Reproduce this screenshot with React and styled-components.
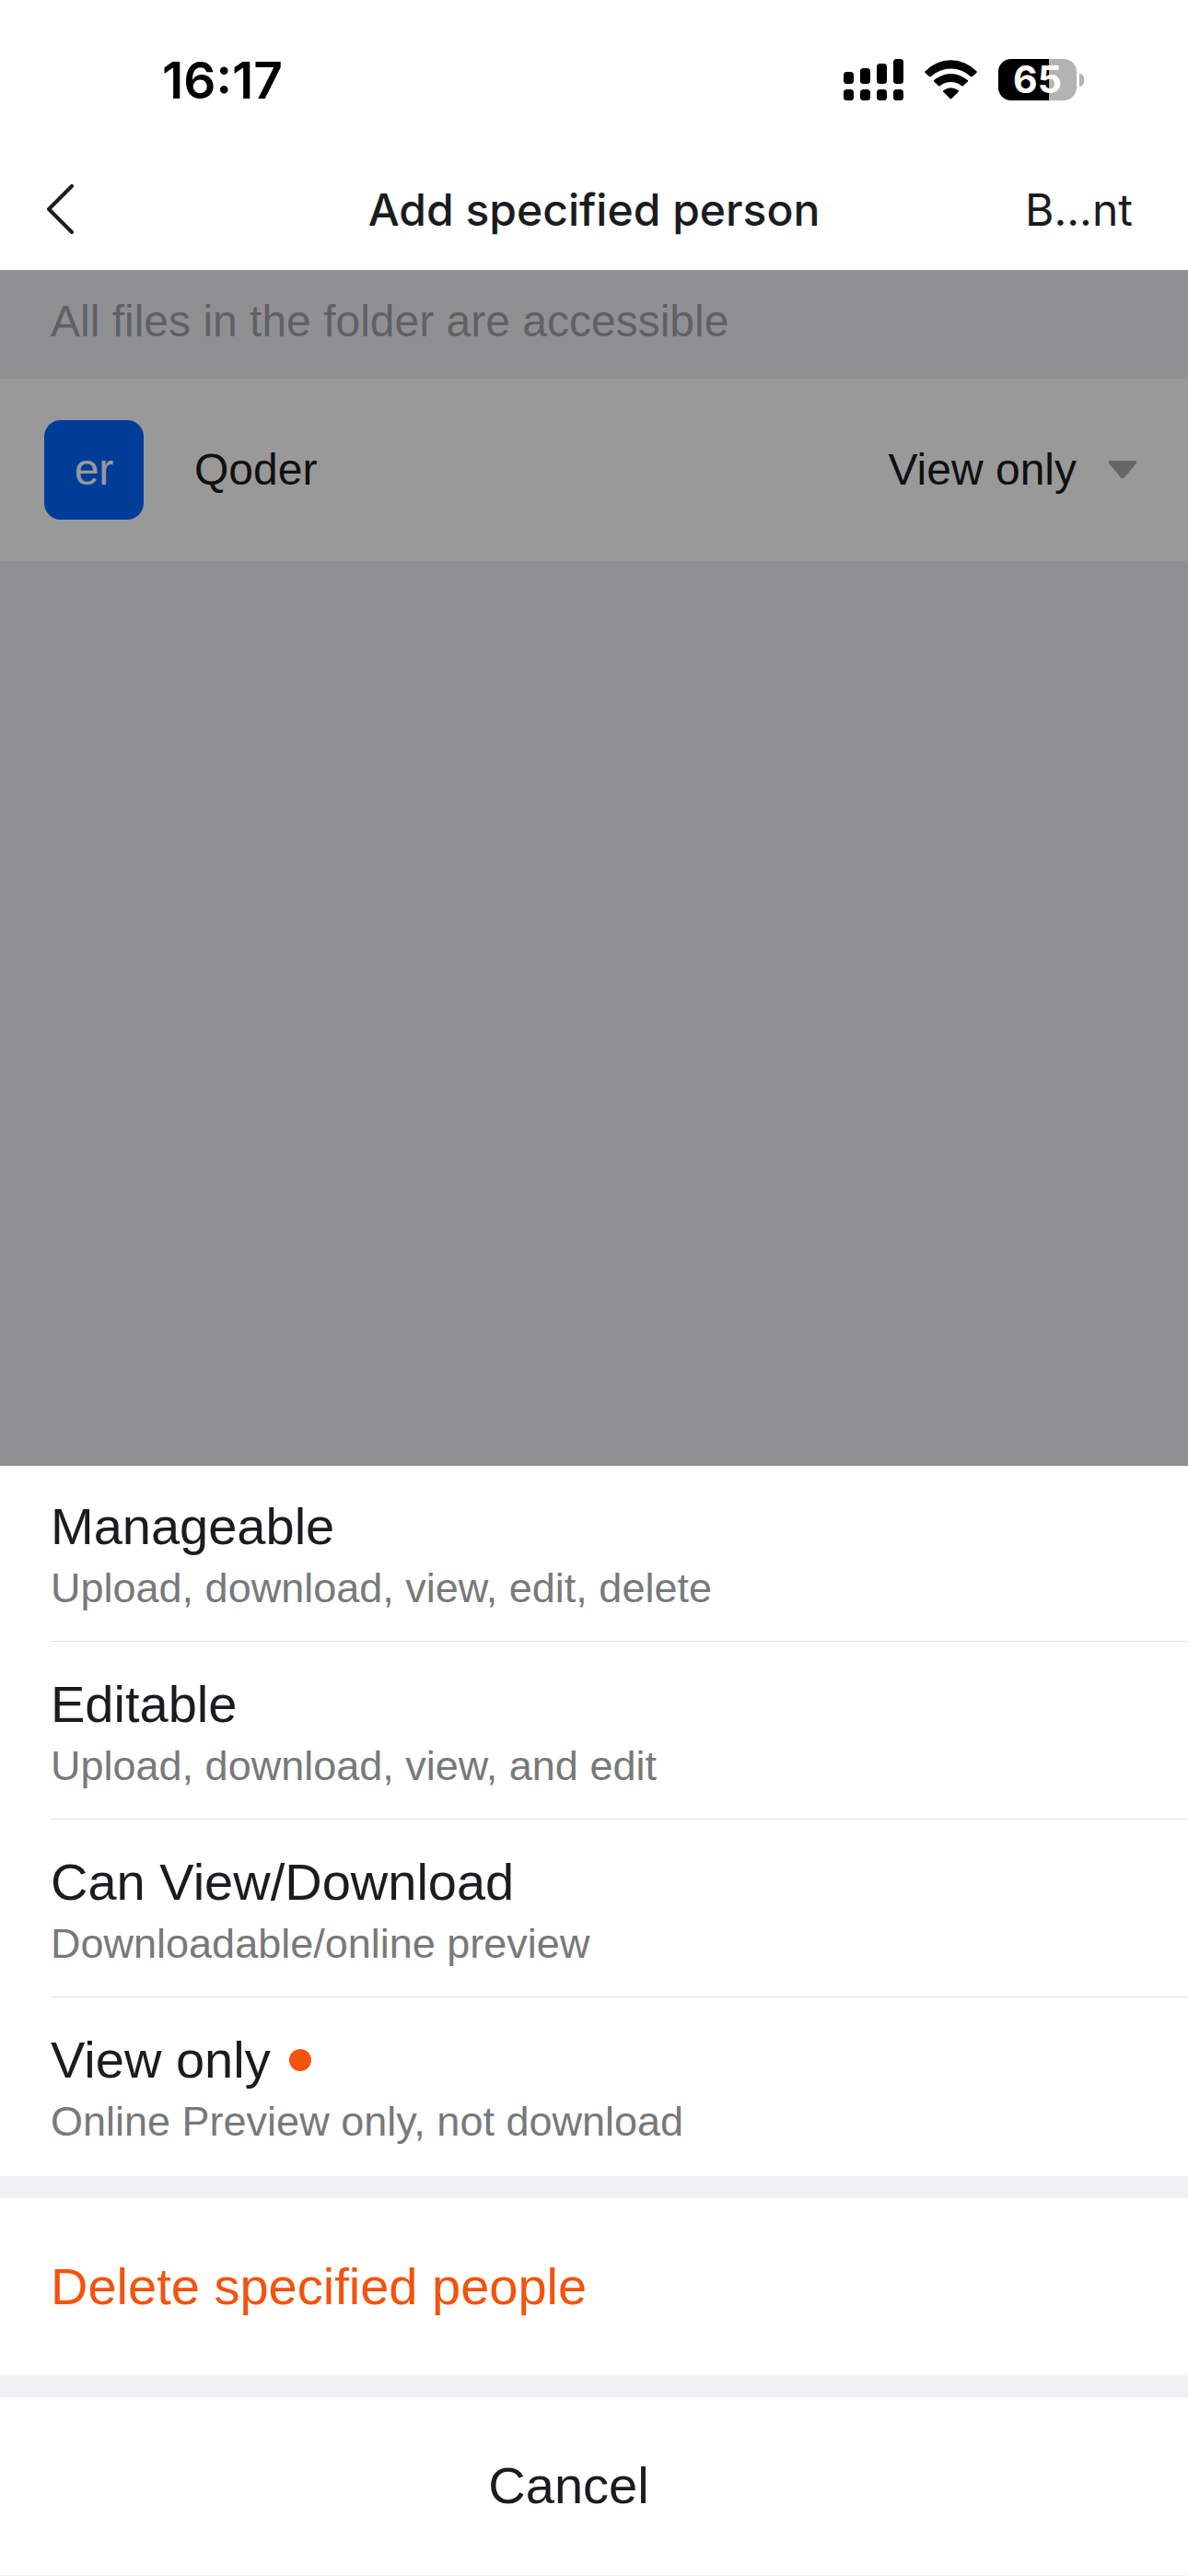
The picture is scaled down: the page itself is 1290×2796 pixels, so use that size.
import React from 'react'
import styled, { createGlobalStyle } from 'styled-components'

const options = [
  { label: 'Manageable', hint: 'Upload, download, view, edit, delete' },
  { label: 'Editable', hint: 'Upload, download, view, and edit' },
  { label: 'Can View/Download', hint: 'Downloadable/online preview' },
  { label: 'View only', hint: 'Online Preview only, not download', selected: true },
];

export default function App() {
  return (
    <Page>
      <GlobalStyle />
      <StatusBar>
        <Time>16:17</Time>
        <StatusIcons>
          <SignalIcon />
          <WifiIcon />
          <Battery>
            <BatteryBody>65</BatteryBody>
            <BatteryTip />
          </Battery>
        </StatusIcons>
      </StatusBar>
      <NavBar>
        <BackButton aria-label="Back">
          <svg width="30" height="56" viewBox="0 0 30 56" fill="none">
            <path d="M28 2 3 27l25 25" stroke="#1a1c1f" strokeWidth="4" strokeLinecap="round" strokeLinejoin="round" />
          </svg>
        </BackButton>
        <Title>Add specified person</Title>
        <NavAction>B...nt</NavAction>
      </NavBar>
      <Content>
        <Note>All files in the folder are accessible</Note>
        <PersonRow>
          <Avatar>er</Avatar>
          <PersonName>Qoder</PersonName>
          <AccessButton>
            View only
            <svg width="32" height="20" viewBox="0 0 32 20">
              <path d="M3 0h26c2 0 2.800 2 1.500 3.400L18 18.200c-1.200 1.200-2.800 1.200-4 0L1.500 3.400C.2 2 1 0 3 0Z" fill="#a9abae" />
            </svg>
          </AccessButton>
        </PersonRow>
        <Overlay>
          <Sheet role="dialog" aria-label="Access">
            <OptionList>
              {options.map((option) => (
                <Option key={option.label}>
                  <OptionButton>
                    <OptionLabel>
                      {option.label}
                      {option.selected && <Dot />}
                    </OptionLabel>
                    <OptionHint>{option.hint}</OptionHint>
                  </OptionButton>
                </Option>
              ))}
            </OptionList>
            <SheetButton $danger>Delete specified people</SheetButton>
            <SheetButton $center>Cancel</SheetButton>
          </Sheet>
        </Overlay>
      </Content>
    </Page>
  )
}

function SignalIcon() {
  const tops = [14, 10, 5, 0];
  return (
    <svg width="65" height="45" viewBox="0 0 65 45">
      {tops.map((top, i) => (
        <g key={top}>
          <rect x={i * 18} y={top} width="11" height={27 - top} rx="3.500" />
          <rect x={i * 18} y="33" width="11" height="12" rx="3.500" />
        </g>
      ))}
    </svg>
  )
}

function WifiIcon() {
  return (
    <svg width="57" height="43" viewBox="0 0 171 129">
      <path d="M2 37A115 115 0 0 1 169 37Q172 39 169 42L156 54Q153 56 150 54A94 94 0 0 0 21 54Q18 56 15 54L2 42Q-1 39 2 37Z" />
      <path d="M31 66A82 82 0 0 1 140 66Q143 68 140 71L126 84Q123 87 120 84A56 56 0 0 0 51 84Q48 87 45 84L31 71Q28 68 31 66Z" />
      <path d="M62 99A38 38 0 0 1 109 99Q113 101 110 104L88 126Q86 128 83 126L61 104Q58 101 62 99Z" />
    </svg>
  )
}


const GlobalStyle = createGlobalStyle`
  * {
    box-sizing: border-box;
  }
  body {
    margin: 0;
    background: #fff;
    color: #1a1c1f;
    font-family: "Liberation Sans", Arial, sans-serif;
  }
  h1, p, ul {
    margin: 0;
    padding: 0;
  }
  button {
    border: none;
    padding: 0;
    background: none;
    color: inherit;
    font: inherit;
    text-align: left;
    cursor: pointer;
  }
  svg {
    display: block;
  }
`;

const Page = styled.div`
  min-height: 100vh;
  display: flex;
  flex-direction: column;
`;

const StatusBar = styled.div`
  height: 161px;
  padding: 12px 113px 0 176px;
  display: flex;
  justify-content: space-between;
  align-items: center;
  color: #000;
  font-family: Inter, sans-serif;
`;

const Time = styled.div`
  font-size: 55px;
  font-weight: 600;
  line-height: 64px;
`;

const StatusIcons = styled.div`
  display: flex;
  align-items: center;
  gap: 23px;
`;

const Battery = styled.div`
  display: flex;
  align-items: center;
  gap: 3px;
`;

const BatteryBody = styled.div`
  width: 85px;
  height: 45px;
  border-radius: 14px;
  background: linear-gradient(to right, #000 65%, #b3b3b3 65%);
  color: #fff;
  font-size: 41px;
  font-weight: 700;
  line-height: 45px;
  text-align: center;
`;

const BatteryTip = styled.div`
  width: 5px;
  height: 14px;
  border-radius: 0 7px 7px 0;
  background: #b3b3b3;
`;

const NavBar = styled.header`
  height: 132px;
  padding: 2px 50px 0;
  display: grid;
  grid-template-columns: 1fr auto 1fr;
  align-items: center;
  font-family: Inter, sans-serif;
`;

const BackButton = styled.button`
  justify-self: start;
`;

const Title = styled.h1`
  font-size: 48px;
  font-weight: 500;
  line-height: 60px;
`;

const NavAction = styled.button`
  && {
    justify-self: end;
    padding: 0 10px;
    font-size: 48px;
    line-height: 60px;
  }
`;

const Content = styled.main`
  position: relative;
  flex: 1;
  background: #f1f1f5;
`;

const Note = styled.p`
  && {
    padding: 28px 55px 34px;
    color: #a0a2a5;
    font-size: 48px;
    line-height: 56px;
  }
`;

const PersonRow = styled.div`
  height: 198px;
  padding: 0 55px 0 48px;
  display: flex;
  align-items: center;
  background: #fff;
  font-size: 48px;
  line-height: 56px;
`;

const Avatar = styled.div`
  width: 108px;
  height: 108px;
  border-radius: 18px;
  display: flex;
  justify-content: center;
  align-items: center;
  background: #06f;
  color: #fff;
`;

const PersonName = styled.div`
  flex: 1;
  margin-left: 55px;
`;

const AccessButton = styled.button`
  display: flex;
  align-items: center;
  gap: 34px;
`;

/* dims the page and holds the sheet at its bottom edge */
const Overlay = styled.div`
  position: absolute;
  inset: 0;
  display: flex;
  flex-direction: column;
  justify-content: flex-end;
  background: rgba(0, 0, 0, 0.4);
`;

const Sheet = styled.section`
  display: flex;
  flex-direction: column;
  gap: 24px;
  border-bottom: 1px solid #f1f1f5;
  background: #f1f1f5;
`;

const OptionList = styled.ul`
  list-style: none;
  background: #fff;
`;

const Option = styled.li`
  margin-left: 55px;
  border-bottom: 1px solid #e1e1e1;

  & + & {
    padding-top: 2px;
  }
  &:last-child {
    border-bottom: none;
    padding-bottom: 2px;
  }
`;

const OptionButton = styled.button`
  width: 100%;
  padding: 32px 0 29px;
  display: flex;
  flex-direction: column;
  gap: 5px;
`;

const OptionLabel = styled.span`
  display: flex;
  align-items: center;
  gap: 20px;
  font-size: 56px;
  line-height: 68px;
`;

const OptionHint = styled.span`
  color: #77797b;
  font-size: 45px;
  line-height: 56px;
`;

const Dot = styled.span`
  width: 24px;
  height: 24px;
  border-radius: 50%;
  background: #f6530c;
`;

const SheetButton = styled.button`
  && {
    padding: 62px 55px;
    background: #fff;
    color: ${({ $danger }) => ($danger ? '#f2530f' : '#1a1c1f')};
    font-size: 56px;
    line-height: 68px;
    ${({ $center }) => $center && 'padding: 62px 55px 63px 0; text-align: center;'}
  }
`;
